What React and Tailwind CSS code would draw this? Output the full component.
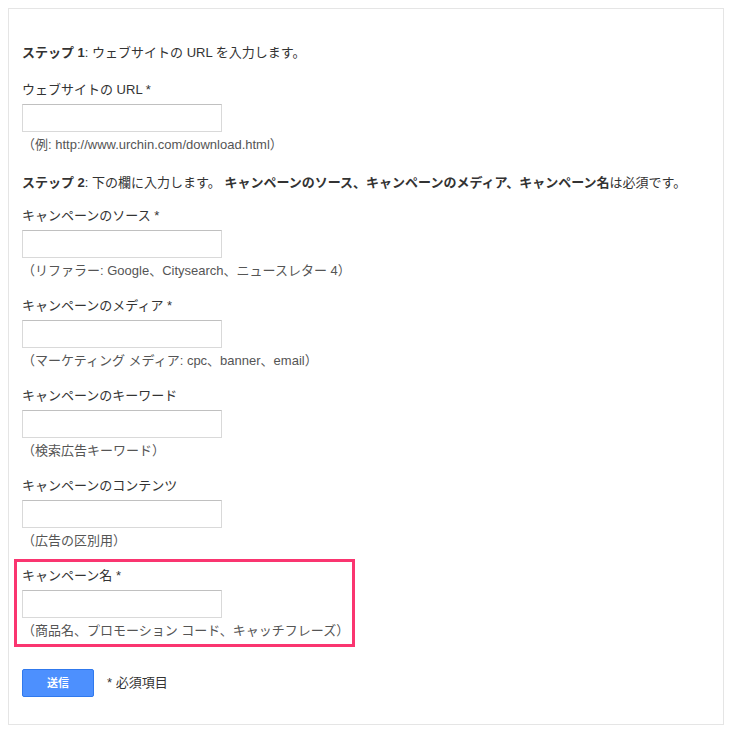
import React from "react";

const fields = [
  { label: "キャンペーンのソース *", hint: "（リファラー: Google、Citysearch、ニュースレター 4）" },
  { label: "キャンペーンのメディア *", hint: "（マーケティング メディア: cpc、banner、email）" },
  { label: "キャンペーンのキーワード", hint: "（検索広告キーワード）" },
  { label: "キャンペーンのコンテンツ", hint: "（広告の区別用）" },
];

function Field({ label, hint }) {
  return (
    <div className="flex flex-col">
      <label className="leading-[20px]">{label}</label>
      <input type="text" className="mt-1 w-[200px] h-[28px] border border-[#d9d9d9] border-t-[#c0c0c0] bg-white outline-none" />
      <p className="mt-[3px] leading-[20px] text-[#555]">{hint}</p>
    </div>
  );
}

export default function App() {
  return (
    <div className="p-2 bg-white" style={{ fontFamily: '"Liberation Sans", "Noto Sans CJK JP", sans-serif' }}>
      <div className="w-[716px] border border-[#e5e5e5] pl-[13px] pt-[34px] pb-[27px] text-[13px] text-[#333]">
        <p className="leading-[20px]">
          <b>ステップ 1</b>: ウェブサイトの URL を入力します。
        </p>

        <div className="mt-[17px]">
          <Field label="ウェブサイトの URL *" hint="（例: http://www.urchin.com/download.html）" />
        </div>

        <p className="mt-[18px] leading-[20px]">
          <b>ステップ 2</b>: 下の欄に入力します。 <b>キャンペーンのソース、キャンペーンのメディア、キャンペーン名</b>は必須です。
        </p>

        <div className="mt-[13px] flex flex-col gap-[15px]">
          {fields.map((f) => (
            <Field key={f.label} label={f.label} hint={f.hint} />
          ))}
        </div>

        <div className="mt-[8px] ml-[-8px] w-[341px] border-[3px] border-[#fa3570] pl-[5px] pt-[4px] pb-[3px]">
          <Field label="キャンペーン名 *" hint="（商品名、プロモーション コード、キャッチフレーズ）" />
        </div>

        <div className="mt-[22px] flex items-center gap-[13px]">
          <button className="w-[72px] h-[28px] rounded-[2px] border border-[#3079ed] bg-[#4d90fe] text-white text-[11px] font-bold">
            送信
          </button>
          <span className="leading-[20px]">* 必須項目</span>
        </div>
      </div>
    </div>
  );
}
